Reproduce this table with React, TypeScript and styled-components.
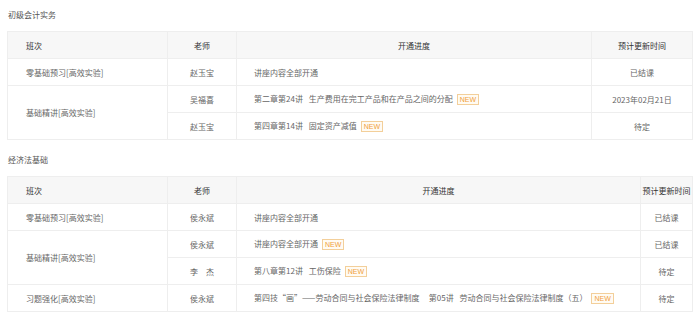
import styled, { createGlobalStyle } from 'styled-components';

const GlobalStyle = createGlobalStyle`
  body {
    margin: 0;
    background: #fff;
    font-family: "Noto Sans CJK SC", "Liberation Sans", sans-serif;
  }
`;

const Page = styled.div`
  padding: 7px 8px 0 7px;
  display: flex;
  flex-direction: column;
  gap: 12px;
`;

const Section = styled.section`
  display: flex;
  flex-direction: column;
  gap: 8px;
`;

const Title = styled.h3`
  margin: 0 0 0 1px;
  font-size: 8px;
  line-height: 16px;
  font-weight: normal;
  color: #555;
`;

const Table = styled.table`
  width: 685px;
  border-collapse: collapse;
  table-layout: fixed;
  font-size: 8px;
  color: #666;
`;

interface CellProps {
  $align?: 'left' | 'center';
}

const Th = styled.th<CellProps>`
  height: 26px;
  padding: 0;
  padding-left: ${(p) => (p.$align === 'left' ? '18px' : '0')};
  background: #f7f7f7;
  border: 1px solid #eeeeee;
  text-align: ${(p) => p.$align || 'center'};
  font-weight: normal;
  color: #333;
  white-space: nowrap;
`;

const Td = styled.td<CellProps>`
  height: 26px;
  padding: 0;
  padding-left: ${(p) => (p.$align === 'left' ? '17px' : '0')};
  border: 1px solid #eeeeee;
  text-align: ${(p) => p.$align || 'center'};
  white-space: pre;
`;

const NameCell = styled(Td)`
  padding-left: 18px;
  text-align: left;
`;

const New = styled.span`
  display: inline-block;
  margin-left: 4px;
  padding: 0 2px;
  height: 9px;
  line-height: 9px;
  font-size: 7px;
  font-family: "Liberation Sans", sans-serif;
  color: #f0a040;
  border: 1px solid #f3cf9a;
  background: #fffbf3;
  vertical-align: middle;
`;

interface Lesson {
  teacher: string;
  progress: string;
  isNew?: boolean;
  update: string;
}

interface Course {
  name: string;
  lessons: Lesson[];
}

interface Subject {
  title: string;
  widths: number[];
  courses: Course[];
}

// en space + space gives the ~5px gap between chapter and lesson title
const gap = '\u2002 ';

const subjects: Subject[] = [
  {
    title: '初级会计实务',
    widths: [160, 69, 355, 101],
    courses: [
      {
        name: '零基础预习[高效实验]',
        lessons: [{ teacher: '赵玉宝', progress: '讲座内容全部开通', update: '已结课' }],
      },
      {
        name: '基础精讲[高效实验]',
        lessons: [
          {
            teacher: '吴福喜',
            progress: `第二章第24讲${gap}生产费用在完工产品和在产品之间的分配`,
            isNew: true,
            update: '2023年02月21日',
          },
          {
            teacher: '赵玉宝',
            progress: `第四章第14讲${gap}固定资产减值`,
            isNew: true,
            update: '待定',
          },
        ],
      },
    ],
  },
  {
    title: '经济法基础',
    widths: [160, 69, 404, 52],
    courses: [
      {
        name: '零基础预习[高效实验]',
        lessons: [{ teacher: '侯永斌', progress: '讲座内容全部开通', update: '已结课' }],
      },
      {
        name: '基础精讲[高效实验]',
        lessons: [
          { teacher: '侯永斌', progress: '讲座内容全部开通', isNew: true, update: '已结课' },
          { teacher: '李　杰', progress: `第八章第12讲${gap}工伤保险`, isNew: true, update: '待定' },
        ],
      },
      {
        name: '习题强化[高效实验]',
        lessons: [
          {
            teacher: '侯永斌',
            progress: `第四技“画”——劳动合同与社会保险法律制度${gap}  第05讲${gap}劳动合同与社会保险法律制度（五）`,
            isNew: true,
            update: '待定',
          },
        ],
      },
    ],
  },
];

function ScheduleTable({ subject }: { subject: Subject }) {
  return (
    <Table>
      <colgroup>
        {subject.widths.map((w, i) => (
          <col key={i} style={{ width: w }} />
        ))}
      </colgroup>
      <thead>
        <tr>
          <Th $align="left">班次</Th>
          <Th>老师</Th>
          <Th>开通进度</Th>
          <Th>预计更新时间</Th>
        </tr>
      </thead>
      <tbody>
        {subject.courses.map((course) =>
          course.lessons.map((lesson, i) => (
            <tr key={course.name + i}>
              {i === 0 && <NameCell rowSpan={course.lessons.length}>{course.name}</NameCell>}
              <Td>{lesson.teacher}</Td>
              <Td $align="left">
                {lesson.progress}
                {lesson.isNew && <New>NEW</New>}
              </Td>
              <Td>{lesson.update}</Td>
            </tr>
          ))
        )}
      </tbody>
    </Table>
  );
}

export default function App() {
  return (
    <>
      <GlobalStyle />
      <Page>
        {subjects.map((s) => (
          <Section key={s.title}>
            <Title>{s.title}</Title>
            <ScheduleTable subject={s} />
          </Section>
        ))}
      </Page>
    </>
  );
}
